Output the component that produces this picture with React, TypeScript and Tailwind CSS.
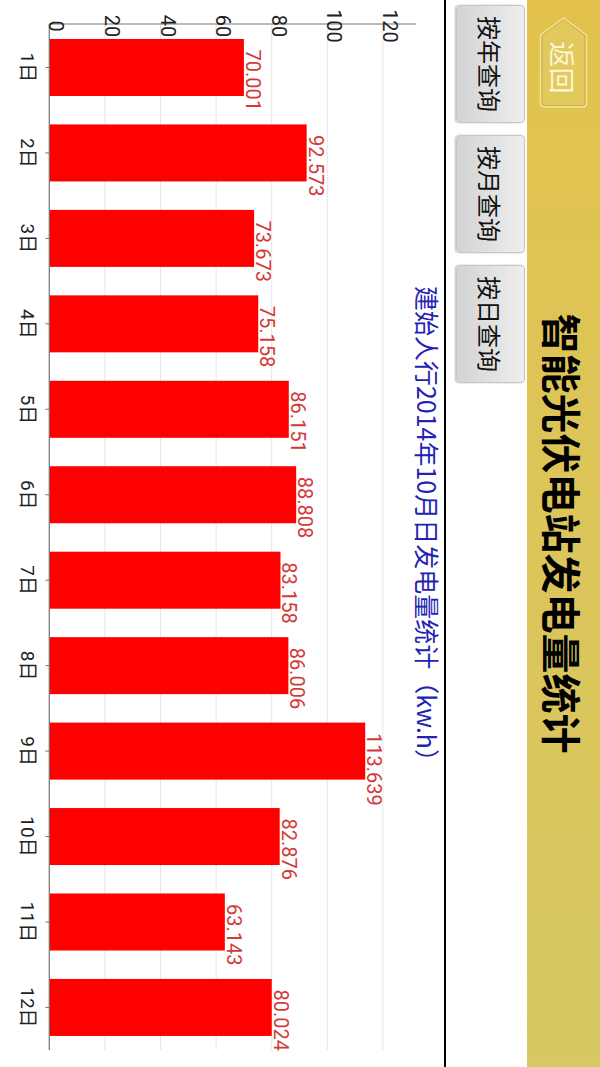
const days = [
  { label: "1日", value: 70.001 },
  { label: "2日", value: 92.573 },
  { label: "3日", value: 73.673 },
  { label: "4日", value: 75.158 },
  { label: "5日", value: 86.151 },
  { label: "6日", value: 88.808 },
  { label: "7日", value: 83.158 },
  { label: "8日", value: 86.006 },
  { label: "9日", value: 113.639 },
  { label: "10日", value: 82.876 },
  { label: "11日", value: 63.143 },
  { label: "12日", value: 80.024 },
];

const ticks = [0, 20, 40, 60, 80, 100, 120];

// chart geometry (landscape coordinates, measured from the black rule)
const axisX = 24;
const baseY = 394.7;
const pxPerUnit = 2.78;
const barLeft0 = 39;
const barStep = 85.45;
const barWidth = 57;
const chartRight = 1050;
const titleH = 28;

function BackButton() {
  return (
    <div className="relative ml-[17px] flex h-[49px] w-[91px] items-center justify-center pl-[10px]">
      <svg className="absolute inset-0" width="91" height="49" viewBox="0 0 91 49">
        <path
          d="M1 24.5 L18 1.5 H86 Q90 1.5 90 5.5 V43.5 Q90 47.5 86 47.5 H18 Z"
          fill="#e1c95e"
          stroke="#f3e49a"
          strokeWidth="1.5"
          strokeLinejoin="round"
        />
        <path
          d="M2.5 24.5 L18.5 3 H85.5 Q88.5 3 88.5 6 V43 Q88.5 46 85.5 46 H18.5 Z"
          fill="none"
          stroke="#c9ae45"
          strokeWidth="1"
          strokeLinejoin="round"
        />
      </svg>
      <span className="relative text-[26px] leading-none text-[#fdf6d6] font-['Noto_Sans_CJK_SC',sans-serif]">
        返回
      </span>
    </div>
  );
}

function Header() {
  return (
    <div className="grid h-[73px] grid-cols-[1fr_auto_1fr] items-center bg-linear-to-r from-[#e2c24c] via-[#dcc55a] to-[#d6c862]">
      <div>
        <BackButton />
      </div>
      <h1 className="text-[40px] font-bold leading-none text-black font-['Noto_Sans_CJK_SC',sans-serif]">
        智能光伏电站发电量统计
      </h1>
      <div />
    </div>
  );
}

function QueryButton({ text }: { text: string }) {
  return (
    <button className="flex h-[69px] w-[118px] items-center justify-center rounded-[4px] border border-[#c6c6c6] bg-linear-to-b from-[#eeeeee] to-[#d3d3d3] text-[24px] leading-none text-[#111] shadow-[0_1px_2px_rgba(0,0,0,0.25)] font-['Noto_Sans_CJK_SC',sans-serif]">
      {text}
    </button>
  );
}

function Toolbar() {
  return (
    <div className="flex h-[81px] items-start gap-[12px] bg-white pl-[5px] pt-[2px]">
      <QueryButton text="按年查询" />
      <QueryButton text="按月查询" />
      <QueryButton text="按日查询" />
    </div>
  );
}

function Chart() {
  const y = (v: number) => baseY - v * pxPerUnit;
  return (
    <div className="flex flex-col bg-white">
      <div className="h-[28px] pt-[2px] pr-[7px] text-center text-[25px] leading-[28px] text-[#2323b2] font-['Noto_Sans_CJK_SC',sans-serif]">
        建始人行2014年10月日发电量统计（kw.h）
      </div>
      <svg width="1067" height={444 - titleH} viewBox={`0 ${titleH} 1067 ${444 - titleH}`} className="block">
        {ticks.map((t) => (
          <line key={t} x1={axisX} x2={chartRight} y1={y(t)} y2={y(t)} stroke="#e6e6e6" strokeWidth="1" />
        ))}

        {days.map((d, i) => {
          const left = barLeft0 + i * barStep;
          const center = left + barWidth / 2;
          const top = y(d.value);
          return (
            <g key={d.label}>
              <rect x={left} y={top} width={barWidth} height={baseY - top} fill="#ff0000" />
              <text x={center - 18} y={top - 2} fill="#d23a3a" fontSize="20" fontFamily="Roboto, sans-serif">
                {d.value.toFixed(3)}
              </text>
              <line x1={center} x2={center} y1={baseY} y2={baseY + 4} stroke="#777" strokeWidth="1" />
              <text
                x={center}
                y="423"
                textAnchor="middle"
                fill="#222"
                fontSize="19"
                fontFamily="Roboto, 'Noto Sans CJK SC', sans-serif"
              >
                {d.label}
              </text>
            </g>
          );
        })}

        <line x1={axisX} x2={axisX} y1="16" y2={baseY} stroke="#777" strokeWidth="1.2" />
        <line x1={axisX} x2={chartRight} y1={baseY} y2={baseY} stroke="#777" strokeWidth="1.2" />

        {ticks.map((t) => (
          <text key={t} x="26" y={y(t)} textAnchor="middle" fill="#222" fontSize="20" fontFamily="Roboto, sans-serif">
            {t}
          </text>
        ))}
      </svg>
    </div>
  );
}

export default function App() {
  return (
    <div className="h-[1067px] w-[600px] overflow-hidden bg-white">
      <div className="flex h-[600px] w-[1067px] origin-top-left rotate-90 translate-x-[600px] flex-col bg-white">
        <Header />
        <Toolbar />
        <div className="h-[2px] bg-black" />
        <Chart />
      </div>
    </div>
  );
}
